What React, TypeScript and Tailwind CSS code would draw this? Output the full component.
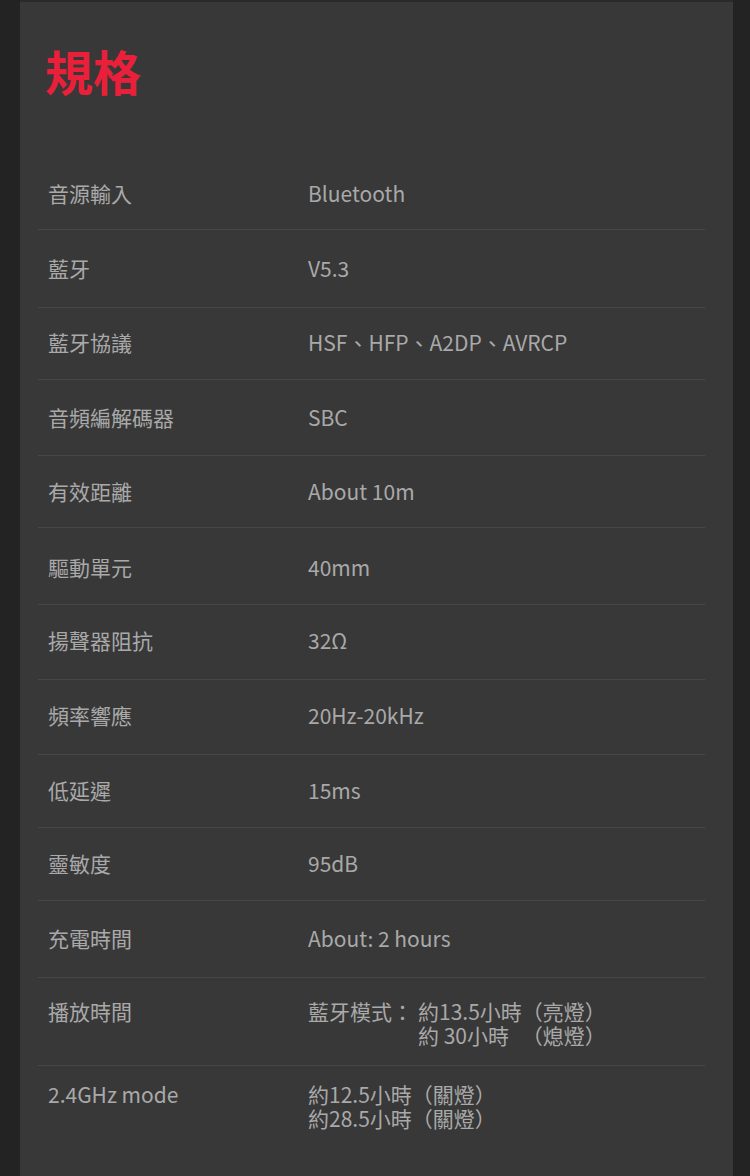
const specs: { label: string; value: string; pad: string }[] = [
  { label: '音源輸入', value: 'Bluetooth', pad: 'pt-[25px] pb-[24px]' },
  { label: '藍牙', value: 'V5.3', pad: 'pt-[26px] pb-[27px]' },
  { label: '藍牙協議', value: 'HSF、HFP、A2DP、AVRCP', pad: 'pt-[22px] pb-[25px]' },
  { label: '音頻編解碼器', value: 'SBC', pad: 'pt-[25px] pb-[26px]' },
  { label: '有效距離', value: 'About 10m', pad: 'pt-[23px] pb-[24px]' },
  { label: '驅動單元', value: '40mm', pad: 'pt-[27px] pb-[25px]' },
  { label: '揚聲器阻抗', value: '32Ω', pad: 'pt-[23px] pb-[27px]' },
  { label: '頻率響應', value: '20Hz-20kHz', pad: 'pt-[23px] pb-[27px]' },
  { label: '低延遲', value: '15ms', pad: 'pt-[23px] pb-[25px]' },
  { label: '靈敏度', value: '95dB', pad: 'pt-[23px] pb-[25px]' },
  { label: '充電時間', value: 'About: 2 hours', pad: 'pt-[25px] pb-[27px]' },
];

export default function App() {
  return (
    <div className="min-h-[1176px] bg-[#232323] font-['Noto_Sans_CJK_TC','Noto_Sans',sans-serif]">
      <div className="ml-[20px] w-[713px] min-h-[1176px] bg-[#383838] border-t-2 border-[#2a2a2a] pl-[18px] pr-[28px]">
        <h2 className="pl-[7px] pt-[44px] text-[48px] leading-[48px] font-bold text-[#ea1f3a]">規格</h2>

        <div className="mt-[62px] text-[21px] text-[#a9a9a9]">
          {specs.map((s) => (
            <div key={s.label} className={`flex leading-[24px] border-b border-[#474747] ${s.pad}`}>
              <div className="w-[270px] pl-[10px]">{s.label}</div>
              <div>{s.value}</div>
            </div>
          ))}

          <div className="flex pt-[21px] pb-[18px] leading-[24px] border-b border-[#474747]">
            <div className="w-[270px] pl-[10px]">播放時間</div>
            <div className="flex">
              <div className="w-[110px]">藍牙模式：</div>
              <div className="grid grid-cols-[auto_auto]">
                <span>約13.5小時</span>
                <span>（亮燈）</span>
                <span>約 30小時</span>
                <span>（熄燈）</span>
              </div>
            </div>
          </div>

          <div className="flex pt-[16px] pb-[20px] leading-[24px]">
            <div className="w-[270px] pl-[10px]">2.4GHz mode</div>
            <div className="flex flex-col">
              <span>約12.5小時（關燈）</span>
              <span>約28.5小時（關燈）</span>
            </div>
          </div>
        </div>
      </div>
    </div>
  );
}
